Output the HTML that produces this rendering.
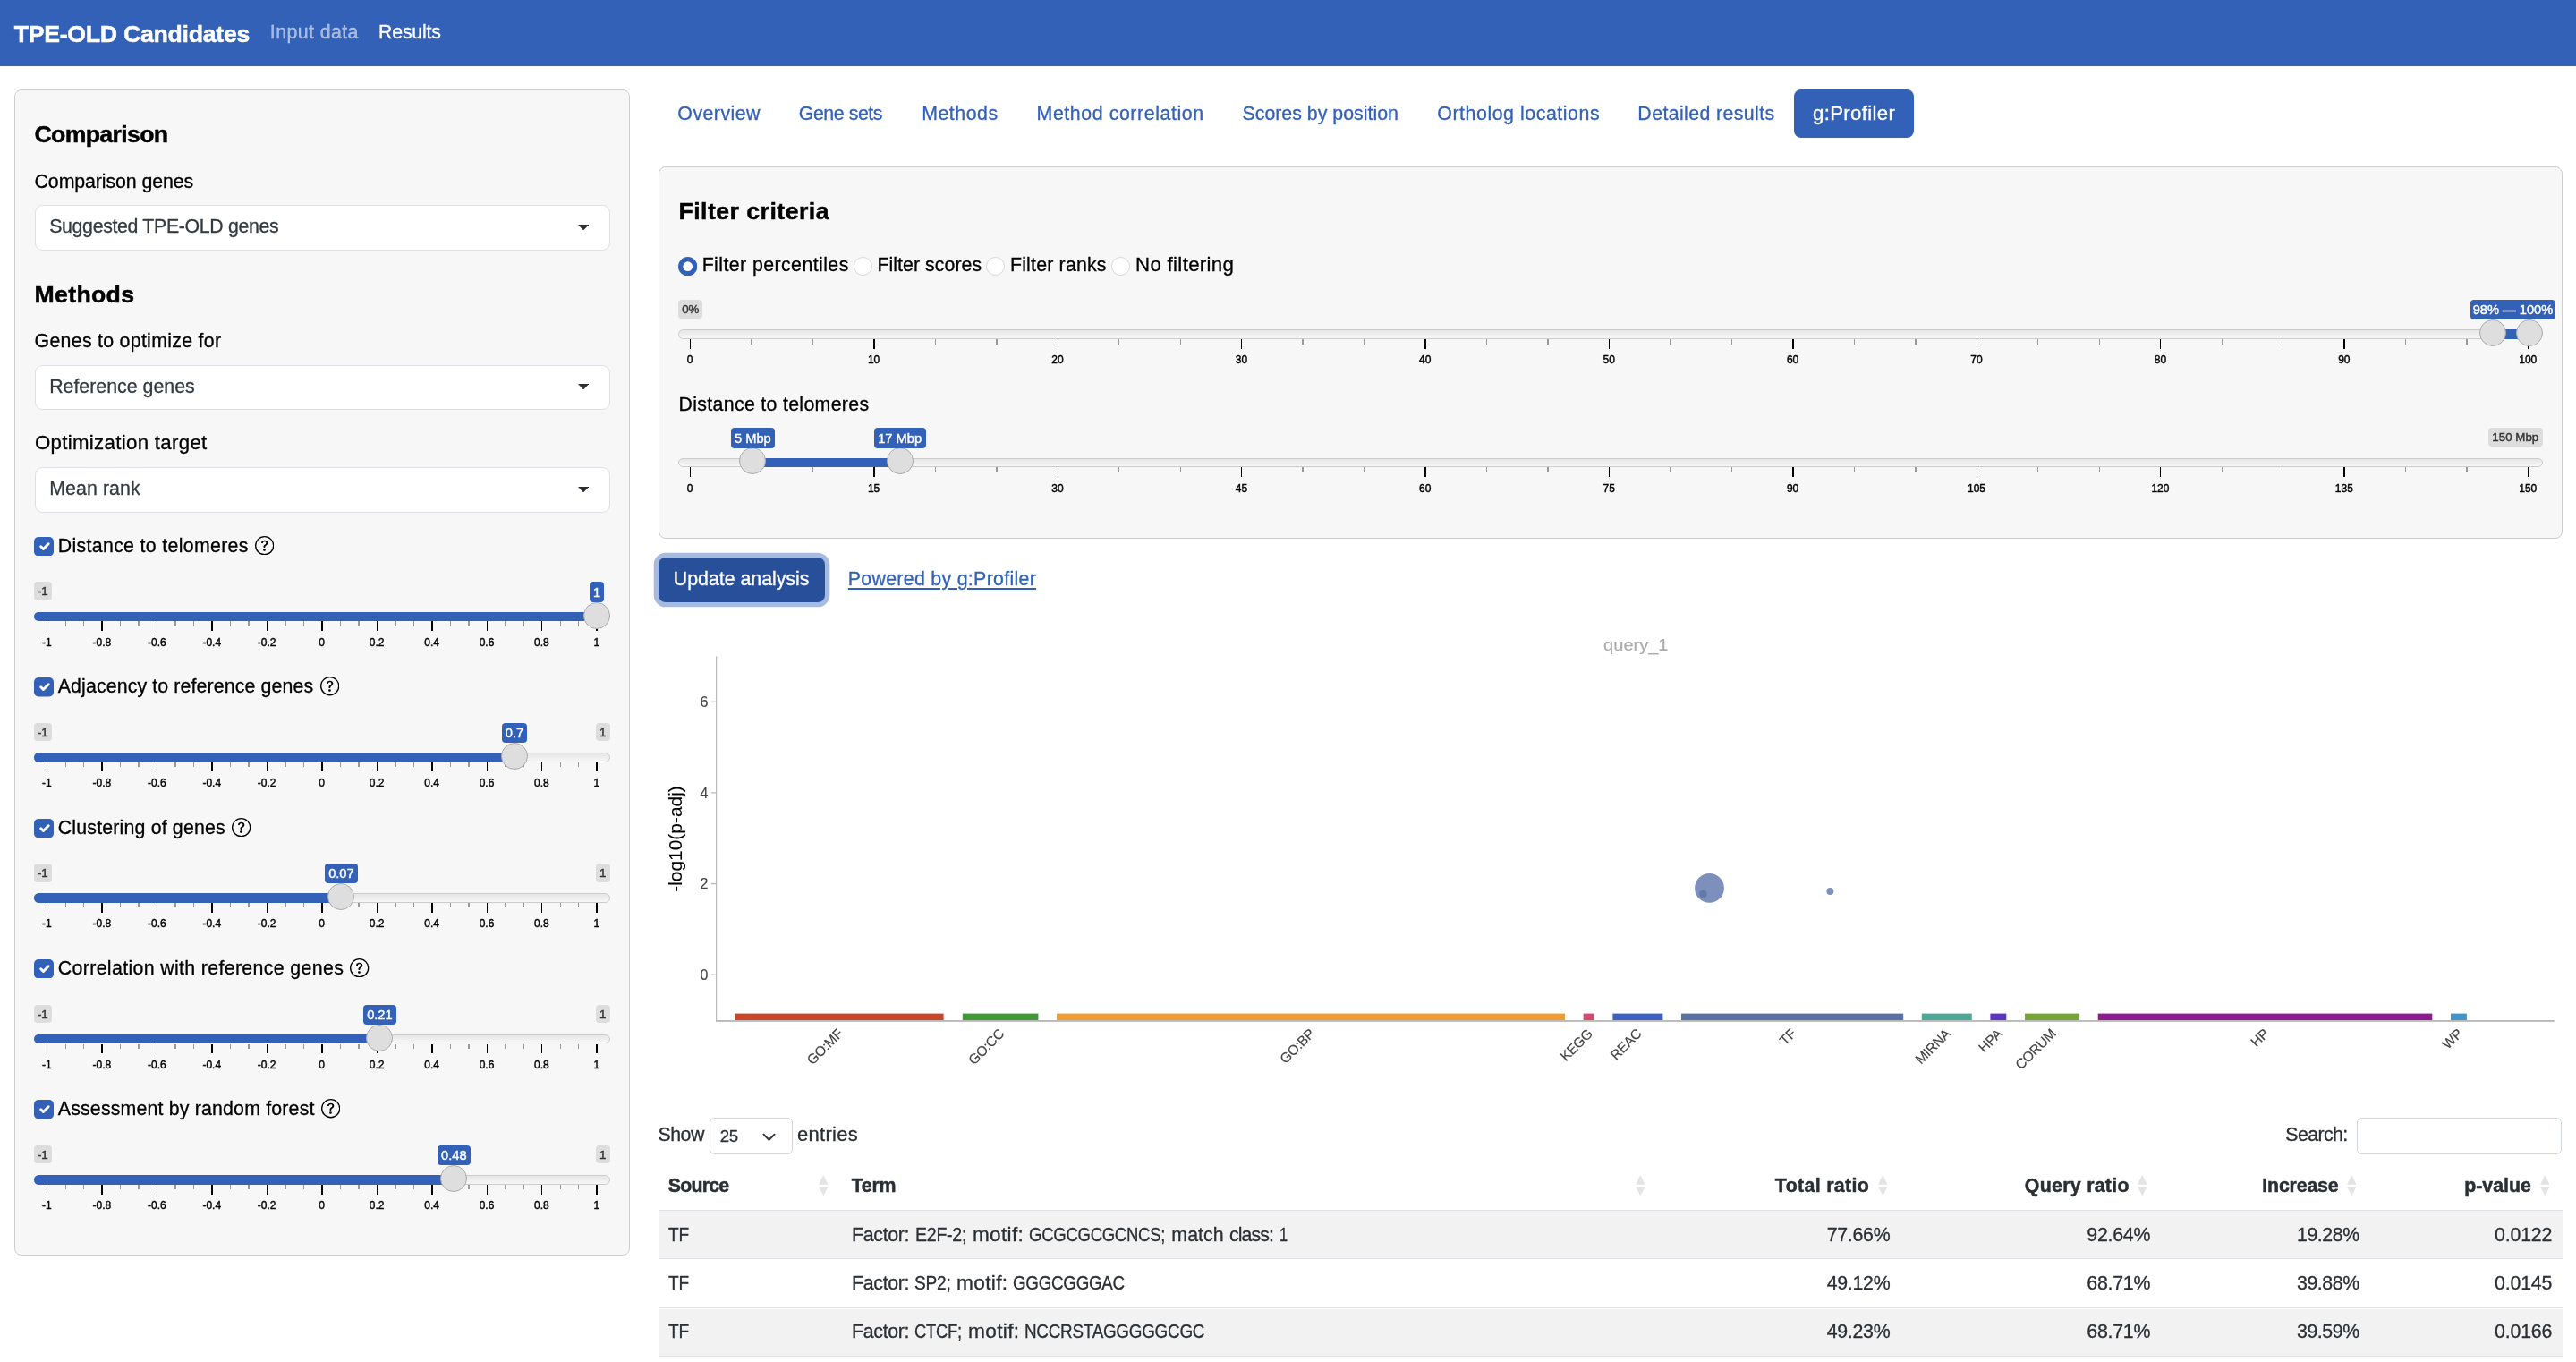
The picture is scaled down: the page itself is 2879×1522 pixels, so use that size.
<!DOCTYPE html>
<html lang="en"><head><meta charset="utf-8"><title>TPE-OLD Candidates</title><style>
html,body{margin:0;padding:0;background:#fff;}
body{width:2879px;height:1522px;overflow:hidden;position:relative;font-family:"Liberation Sans", sans-serif;}
#p{position:absolute;left:0;top:0;width:2879px;height:1522px;will-change:transform;}
#p>div,#p>span,#p>svg{position:absolute;display:block;}
#p>span{white-space:nowrap;line-height:1;-webkit-text-stroke:0.3px;}
span.c{text-align:center;}
span.r{text-align:right;}
</style></head>
<body><div id="p">
<div style="left:0.00px;top:0.00px;width:2879.00px;height:74.00px;background:#3361b8;"></div>
<span style="left:15.67px;top:24.93px;font-size:26.67px;color:#fff;font-weight:700;letter-spacing:-0.258px;-webkit-text-stroke:0.5px;">TPE-OLD Candidates</span>
<span style="left:301.87px;top:25.51px;font-size:21.33px;color:rgba(255,255,255,.55);font-weight:400;letter-spacing:0.407px;">Input data</span>
<span style="left:423.07px;top:25.51px;font-size:21.33px;color:#fff;font-weight:400;letter-spacing:-0.214px;">Results</span>
<div style="left:16.00px;top:100.00px;width:688.00px;height:1302.60px;background:#f7f7f7;border:1px solid #cdcdcd;border-radius:8px;box-sizing:border-box;"></div>
<span style="left:38.47px;top:137.03px;font-size:26.67px;color:#000;font-weight:700;letter-spacing:-0.657px;-webkit-text-stroke:0.5px;">Comparison</span>
<span style="left:38.47px;top:315.83px;font-size:26.67px;color:#000;font-weight:700;letter-spacing:0.334px;-webkit-text-stroke:0.5px;">Methods</span>
<span style="left:38.57px;top:192.51px;font-size:21.33px;color:#000;font-weight:400;letter-spacing:-0.093px;">Comparison genes</span>
<div style="left:38.50px;top:229.10px;width:643.20px;height:50.60px;background:#fff;border:1px solid #dcdfe5;border-radius:8.5px;box-sizing:border-box;"></div>
<span style="left:55.17px;top:243.01px;font-size:21.33px;color:#343a40;font-weight:400;letter-spacing:-0.335px;">Suggested TPE-OLD genes</span>
<svg style="left:646px;top:250.80px" width="12.2" height="6.4" viewBox="0 0 12.2 6.4"><path d="M0 0H12.2L6.1 6.4z" fill="#2d2f33"/></svg>
<span style="left:38.57px;top:370.91px;font-size:21.33px;color:#000;font-weight:400;letter-spacing:0.286px;">Genes to optimize for</span>
<div style="left:38.50px;top:408.00px;width:643.20px;height:49.90px;background:#fff;border:1px solid #dcdfe5;border-radius:8.5px;box-sizing:border-box;"></div>
<span style="left:55.17px;top:421.91px;font-size:21.33px;color:#343a40;font-weight:400;letter-spacing:0.006px;">Reference genes</span>
<svg style="left:646px;top:428.80px" width="12.2" height="6.4" viewBox="0 0 12.2 6.4"><path d="M0 0H12.2L6.1 6.4z" fill="#2d2f33"/></svg>
<span style="left:38.57px;top:485.31px;font-size:21.33px;color:#000;font-weight:400;letter-spacing:0.300px;transform:scaleX(1.0425);transform-origin:0 0;">Optimization target</span>
<div style="left:38.50px;top:522.20px;width:643.20px;height:50.40px;background:#fff;border:1px solid #dcdfe5;border-radius:8.5px;box-sizing:border-box;"></div>
<span style="left:55.17px;top:536.11px;font-size:21.33px;color:#343a40;font-weight:400;letter-spacing:0.095px;">Mean rank</span>
<svg style="left:646px;top:543.90px" width="12.2" height="6.4" viewBox="0 0 12.2 6.4"><path d="M0 0H12.2L6.1 6.4z" fill="#2d2f33"/></svg>
<svg style="left:38px;top:600.00px" width="22" height="21.4" viewBox="0 0 20 20" preserveAspectRatio="none"><rect width="20" height="20" rx="4.6" fill="#3361b8"/><path d="M7 10l2.5 2.55l5.2-5.35" fill="none" stroke="#fff" stroke-width="2.7" stroke-linecap="round" stroke-linejoin="round"/></svg>
<span style="left:64.77px;top:599.91px;font-size:21.33px;color:#000;font-weight:400;letter-spacing:0.319px;">Distance to telomeres</span>
<svg style="left:284.80px;top:599.10px" width="21.4" height="21.4" viewBox="0 0 16 16" fill="#000"><path d="M8 15A7 7 0 1 1 8 1a7 7 0 0 1 0 14zm0 1A8 8 0 1 0 8 0a8 8 0 0 0 0 16z"/><path d="M5.255 5.786a.237.237 0 0 0 .241.247h.825c.138 0 .248-.113.266-.25.09-.656.54-1.134 1.342-1.134.686 0 1.314.343 1.314 1.168 0 .635-.374.927-.965 1.371-.673.489-1.206 1.06-1.168 1.987l.003.217a.25.25 0 0 0 .25.246h.811a.25.25 0 0 0 .25-.25v-.105c0-.718.273-.927 1.01-1.486.609-.463 1.244-.977 1.244-2.056 0-1.511-1.276-2.241-2.673-2.241-1.267 0-2.655.59-2.75 2.286zm1.557 5.763c0 .533.425.927 1.01.927.609 0 1.028-.394 1.028-.927 0-.552-.42-.94-1.029-.94-.584 0-1.009.388-1.009.94z"/></svg>
<div style="left:38.00px;top:683.63px;width:643.80px;height:10.67px;box-sizing:border-box;border:1px solid #ccc;border-radius:6px;background:linear-gradient(to bottom,#dedede -50%,#fff 150%);"></div>
<div style="left:38.00px;top:683.63px;width:629.13px;height:10.67px;background:#3361b8;border-radius:6px 0 0 6px;"></div>
<div style="left:52.03px;top:694.30px;width:1.40px;height:10.67px;background:#000;"></div>
<span class="c" style="left:-47.57px;width:200px;top:711.66px;font-size:12px;color:#000;font-weight:400;-webkit-text-stroke:0.42px;">-1</span>
<div style="left:72.51px;top:694.30px;width:1.40px;height:5.33px;background:#999;"></div>
<div style="left:92.99px;top:694.30px;width:1.40px;height:5.33px;background:#999;"></div>
<div style="left:113.47px;top:694.30px;width:1.40px;height:10.67px;background:#000;"></div>
<span class="c" style="left:13.87px;width:200px;top:711.66px;font-size:12px;color:#000;font-weight:400;-webkit-text-stroke:0.42px;">-0.8</span>
<div style="left:133.95px;top:694.30px;width:1.40px;height:5.33px;background:#999;"></div>
<div style="left:154.44px;top:694.30px;width:1.40px;height:5.33px;background:#999;"></div>
<div style="left:174.92px;top:694.30px;width:1.40px;height:10.67px;background:#000;"></div>
<span class="c" style="left:75.32px;width:200px;top:711.66px;font-size:12px;color:#000;font-weight:400;-webkit-text-stroke:0.42px;">-0.6</span>
<div style="left:195.40px;top:694.30px;width:1.40px;height:5.33px;background:#999;"></div>
<div style="left:215.88px;top:694.30px;width:1.40px;height:5.33px;background:#999;"></div>
<div style="left:236.36px;top:694.30px;width:1.40px;height:10.67px;background:#000;"></div>
<span class="c" style="left:136.76px;width:200px;top:711.66px;font-size:12px;color:#000;font-weight:400;-webkit-text-stroke:0.42px;">-0.4</span>
<div style="left:256.85px;top:694.30px;width:1.40px;height:5.33px;background:#999;"></div>
<div style="left:277.33px;top:694.30px;width:1.40px;height:5.33px;background:#999;"></div>
<div style="left:297.81px;top:694.30px;width:1.40px;height:10.67px;background:#000;"></div>
<span class="c" style="left:198.21px;width:200px;top:711.66px;font-size:12px;color:#000;font-weight:400;-webkit-text-stroke:0.42px;">-0.2</span>
<div style="left:318.29px;top:694.30px;width:1.40px;height:5.33px;background:#999;"></div>
<div style="left:338.77px;top:694.30px;width:1.40px;height:5.33px;background:#999;"></div>
<div style="left:359.26px;top:694.30px;width:1.40px;height:10.67px;background:#000;"></div>
<span class="c" style="left:259.66px;width:200px;top:711.66px;font-size:12px;color:#000;font-weight:400;-webkit-text-stroke:0.42px;">0</span>
<div style="left:379.74px;top:694.30px;width:1.40px;height:5.33px;background:#999;"></div>
<div style="left:400.22px;top:694.30px;width:1.40px;height:5.33px;background:#999;"></div>
<div style="left:420.70px;top:694.30px;width:1.40px;height:10.67px;background:#000;"></div>
<span class="c" style="left:321.10px;width:200px;top:711.66px;font-size:12px;color:#000;font-weight:400;-webkit-text-stroke:0.42px;">0.2</span>
<div style="left:441.18px;top:694.30px;width:1.40px;height:5.33px;background:#999;"></div>
<div style="left:461.67px;top:694.30px;width:1.40px;height:5.33px;background:#999;"></div>
<div style="left:482.15px;top:694.30px;width:1.40px;height:10.67px;background:#000;"></div>
<span class="c" style="left:382.55px;width:200px;top:711.66px;font-size:12px;color:#000;font-weight:400;-webkit-text-stroke:0.42px;">0.4</span>
<div style="left:502.63px;top:694.30px;width:1.40px;height:5.33px;background:#999;"></div>
<div style="left:523.11px;top:694.30px;width:1.40px;height:5.33px;background:#999;"></div>
<div style="left:543.59px;top:694.30px;width:1.40px;height:10.67px;background:#000;"></div>
<span class="c" style="left:443.99px;width:200px;top:711.66px;font-size:12px;color:#000;font-weight:400;-webkit-text-stroke:0.42px;">0.6</span>
<div style="left:564.08px;top:694.30px;width:1.40px;height:5.33px;background:#999;"></div>
<div style="left:584.56px;top:694.30px;width:1.40px;height:5.33px;background:#999;"></div>
<div style="left:605.04px;top:694.30px;width:1.40px;height:10.67px;background:#000;"></div>
<span class="c" style="left:505.44px;width:200px;top:711.66px;font-size:12px;color:#000;font-weight:400;-webkit-text-stroke:0.42px;">0.8</span>
<div style="left:625.52px;top:694.30px;width:1.40px;height:5.33px;background:#999;"></div>
<div style="left:646.00px;top:694.30px;width:1.40px;height:5.33px;background:#999;"></div>
<div style="left:666.49px;top:694.30px;width:1.40px;height:10.67px;background:#000;"></div>
<span class="c" style="left:566.89px;width:200px;top:711.66px;font-size:12px;color:#000;font-weight:400;-webkit-text-stroke:0.42px;">1</span>
<div style="left:652.13px;top:672.50px;width:30.00px;height:30.00px;box-sizing:border-box;border:1px solid #ababab;background:#dedede;border-radius:50%;"></div>
<div style="left:38.00px;top:650.30px;width:19.60px;height:20.60px;background:rgba(0,0,0,.1);border-radius:4px;"></div>
<span class="c" style="left:-52.20px;width:200px;top:654.40px;font-size:13.33px;color:#333;font-weight:400;-webkit-text-stroke:0.42px;">-1</span>
<div style="left:659.14px;top:650.30px;width:16.00px;height:22.40px;background:#3361b8;border-radius:4px;"></div>
<span class="c" style="left:567.14px;width:200px;top:654.68px;font-size:14.67px;color:#fff;font-weight:400;-webkit-text-stroke:0.42px;">1</span>
<svg style="left:38px;top:757.30px" width="22" height="21.4" viewBox="0 0 20 20" preserveAspectRatio="none"><rect width="20" height="20" rx="4.6" fill="#3361b8"/><path d="M7 10l2.5 2.55l5.2-5.35" fill="none" stroke="#fff" stroke-width="2.7" stroke-linecap="round" stroke-linejoin="round"/></svg>
<span style="left:64.77px;top:757.21px;font-size:21.33px;color:#000;font-weight:400;letter-spacing:0.117px;">Adjacency to reference genes</span>
<svg style="left:357.50px;top:756.40px" width="21.4" height="21.4" viewBox="0 0 16 16" fill="#000"><path d="M8 15A7 7 0 1 1 8 1a7 7 0 0 1 0 14zm0 1A8 8 0 1 0 8 0a8 8 0 0 0 0 16z"/><path d="M5.255 5.786a.237.237 0 0 0 .241.247h.825c.138 0 .248-.113.266-.25.09-.656.54-1.134 1.342-1.134.686 0 1.314.343 1.314 1.168 0 .635-.374.927-.965 1.371-.673.489-1.206 1.06-1.168 1.987l.003.217a.25.25 0 0 0 .25.246h.811a.25.25 0 0 0 .25-.25v-.105c0-.718.273-.927 1.01-1.486.609-.463 1.244-.977 1.244-2.056 0-1.511-1.276-2.241-2.673-2.241-1.267 0-2.655.59-2.75 2.286zm1.557 5.763c0 .533.425.927 1.01.927.609 0 1.028-.394 1.028-.927 0-.552-.42-.94-1.029-.94-.584 0-1.009.388-1.009.94z"/></svg>
<div style="left:38.00px;top:841.03px;width:643.80px;height:10.67px;box-sizing:border-box;border:1px solid #ccc;border-radius:6px;background:linear-gradient(to bottom,#dedede -50%,#fff 150%);"></div>
<div style="left:38.00px;top:841.03px;width:536.96px;height:10.67px;background:#3361b8;border-radius:6px 0 0 6px;"></div>
<div style="left:52.03px;top:851.70px;width:1.40px;height:10.67px;background:#000;"></div>
<span class="c" style="left:-47.57px;width:200px;top:869.06px;font-size:12px;color:#000;font-weight:400;-webkit-text-stroke:0.42px;">-1</span>
<div style="left:72.51px;top:851.70px;width:1.40px;height:5.33px;background:#999;"></div>
<div style="left:92.99px;top:851.70px;width:1.40px;height:5.33px;background:#999;"></div>
<div style="left:113.47px;top:851.70px;width:1.40px;height:10.67px;background:#000;"></div>
<span class="c" style="left:13.87px;width:200px;top:869.06px;font-size:12px;color:#000;font-weight:400;-webkit-text-stroke:0.42px;">-0.8</span>
<div style="left:133.95px;top:851.70px;width:1.40px;height:5.33px;background:#999;"></div>
<div style="left:154.44px;top:851.70px;width:1.40px;height:5.33px;background:#999;"></div>
<div style="left:174.92px;top:851.70px;width:1.40px;height:10.67px;background:#000;"></div>
<span class="c" style="left:75.32px;width:200px;top:869.06px;font-size:12px;color:#000;font-weight:400;-webkit-text-stroke:0.42px;">-0.6</span>
<div style="left:195.40px;top:851.70px;width:1.40px;height:5.33px;background:#999;"></div>
<div style="left:215.88px;top:851.70px;width:1.40px;height:5.33px;background:#999;"></div>
<div style="left:236.36px;top:851.70px;width:1.40px;height:10.67px;background:#000;"></div>
<span class="c" style="left:136.76px;width:200px;top:869.06px;font-size:12px;color:#000;font-weight:400;-webkit-text-stroke:0.42px;">-0.4</span>
<div style="left:256.85px;top:851.70px;width:1.40px;height:5.33px;background:#999;"></div>
<div style="left:277.33px;top:851.70px;width:1.40px;height:5.33px;background:#999;"></div>
<div style="left:297.81px;top:851.70px;width:1.40px;height:10.67px;background:#000;"></div>
<span class="c" style="left:198.21px;width:200px;top:869.06px;font-size:12px;color:#000;font-weight:400;-webkit-text-stroke:0.42px;">-0.2</span>
<div style="left:318.29px;top:851.70px;width:1.40px;height:5.33px;background:#999;"></div>
<div style="left:338.77px;top:851.70px;width:1.40px;height:5.33px;background:#999;"></div>
<div style="left:359.26px;top:851.70px;width:1.40px;height:10.67px;background:#000;"></div>
<span class="c" style="left:259.66px;width:200px;top:869.06px;font-size:12px;color:#000;font-weight:400;-webkit-text-stroke:0.42px;">0</span>
<div style="left:379.74px;top:851.70px;width:1.40px;height:5.33px;background:#999;"></div>
<div style="left:400.22px;top:851.70px;width:1.40px;height:5.33px;background:#999;"></div>
<div style="left:420.70px;top:851.70px;width:1.40px;height:10.67px;background:#000;"></div>
<span class="c" style="left:321.10px;width:200px;top:869.06px;font-size:12px;color:#000;font-weight:400;-webkit-text-stroke:0.42px;">0.2</span>
<div style="left:441.18px;top:851.70px;width:1.40px;height:5.33px;background:#999;"></div>
<div style="left:461.67px;top:851.70px;width:1.40px;height:5.33px;background:#999;"></div>
<div style="left:482.15px;top:851.70px;width:1.40px;height:10.67px;background:#000;"></div>
<span class="c" style="left:382.55px;width:200px;top:869.06px;font-size:12px;color:#000;font-weight:400;-webkit-text-stroke:0.42px;">0.4</span>
<div style="left:502.63px;top:851.70px;width:1.40px;height:5.33px;background:#999;"></div>
<div style="left:523.11px;top:851.70px;width:1.40px;height:5.33px;background:#999;"></div>
<div style="left:543.59px;top:851.70px;width:1.40px;height:10.67px;background:#000;"></div>
<span class="c" style="left:443.99px;width:200px;top:869.06px;font-size:12px;color:#000;font-weight:400;-webkit-text-stroke:0.42px;">0.6</span>
<div style="left:564.08px;top:851.70px;width:1.40px;height:5.33px;background:#999;"></div>
<div style="left:584.56px;top:851.70px;width:1.40px;height:5.33px;background:#999;"></div>
<div style="left:605.04px;top:851.70px;width:1.40px;height:10.67px;background:#000;"></div>
<span class="c" style="left:505.44px;width:200px;top:869.06px;font-size:12px;color:#000;font-weight:400;-webkit-text-stroke:0.42px;">0.8</span>
<div style="left:625.52px;top:851.70px;width:1.40px;height:5.33px;background:#999;"></div>
<div style="left:646.00px;top:851.70px;width:1.40px;height:5.33px;background:#999;"></div>
<div style="left:666.49px;top:851.70px;width:1.40px;height:10.67px;background:#000;"></div>
<span class="c" style="left:566.89px;width:200px;top:869.06px;font-size:12px;color:#000;font-weight:400;-webkit-text-stroke:0.42px;">1</span>
<div style="left:559.96px;top:829.90px;width:30.00px;height:30.00px;box-sizing:border-box;border:1px solid #ababab;background:#dedede;border-radius:50%;"></div>
<div style="left:38.00px;top:807.70px;width:19.60px;height:20.60px;background:rgba(0,0,0,.1);border-radius:4px;"></div>
<span class="c" style="left:-52.20px;width:200px;top:811.80px;font-size:13.33px;color:#333;font-weight:400;-webkit-text-stroke:0.42px;">-1</span>
<div style="left:665.80px;top:807.70px;width:16.00px;height:20.60px;background:rgba(0,0,0,.1);border-radius:4px;"></div>
<span class="c" style="left:573.80px;width:200px;top:811.80px;font-size:13.33px;color:#333;font-weight:400;-webkit-text-stroke:0.42px;">1</span>
<div style="left:560.97px;top:807.70px;width:28.00px;height:22.40px;background:#3361b8;border-radius:4px;"></div>
<span class="c" style="left:474.97px;width:200px;top:812.08px;font-size:14.67px;color:#fff;font-weight:400;-webkit-text-stroke:0.42px;">0.7</span>
<svg style="left:38px;top:914.60px" width="22" height="21.4" viewBox="0 0 20 20" preserveAspectRatio="none"><rect width="20" height="20" rx="4.6" fill="#3361b8"/><path d="M7 10l2.5 2.55l5.2-5.35" fill="none" stroke="#fff" stroke-width="2.7" stroke-linecap="round" stroke-linejoin="round"/></svg>
<span style="left:64.77px;top:914.51px;font-size:21.33px;color:#000;font-weight:400;letter-spacing:0.175px;">Clustering of genes</span>
<svg style="left:259.10px;top:913.70px" width="21.4" height="21.4" viewBox="0 0 16 16" fill="#000"><path d="M8 15A7 7 0 1 1 8 1a7 7 0 0 1 0 14zm0 1A8 8 0 1 0 8 0a8 8 0 0 0 0 16z"/><path d="M5.255 5.786a.237.237 0 0 0 .241.247h.825c.138 0 .248-.113.266-.25.09-.656.54-1.134 1.342-1.134.686 0 1.314.343 1.314 1.168 0 .635-.374.927-.965 1.371-.673.489-1.206 1.06-1.168 1.987l.003.217a.25.25 0 0 0 .25.246h.811a.25.25 0 0 0 .25-.25v-.105c0-.718.273-.927 1.01-1.486.609-.463 1.244-.977 1.244-2.056 0-1.511-1.276-2.241-2.673-2.241-1.267 0-2.655.59-2.75 2.286zm1.557 5.763c0 .533.425.927 1.01.927.609 0 1.028-.394 1.028-.927 0-.552-.42-.94-1.029-.94-.584 0-1.009.388-1.009.94z"/></svg>
<div style="left:38.00px;top:998.43px;width:643.80px;height:10.67px;box-sizing:border-box;border:1px solid #ccc;border-radius:6px;background:linear-gradient(to bottom,#dedede -50%,#fff 150%);"></div>
<div style="left:38.00px;top:998.43px;width:343.41px;height:10.67px;background:#3361b8;border-radius:6px 0 0 6px;"></div>
<div style="left:52.03px;top:1009.10px;width:1.40px;height:10.67px;background:#000;"></div>
<span class="c" style="left:-47.57px;width:200px;top:1026.46px;font-size:12px;color:#000;font-weight:400;-webkit-text-stroke:0.42px;">-1</span>
<div style="left:72.51px;top:1009.10px;width:1.40px;height:5.33px;background:#999;"></div>
<div style="left:92.99px;top:1009.10px;width:1.40px;height:5.33px;background:#999;"></div>
<div style="left:113.47px;top:1009.10px;width:1.40px;height:10.67px;background:#000;"></div>
<span class="c" style="left:13.87px;width:200px;top:1026.46px;font-size:12px;color:#000;font-weight:400;-webkit-text-stroke:0.42px;">-0.8</span>
<div style="left:133.95px;top:1009.10px;width:1.40px;height:5.33px;background:#999;"></div>
<div style="left:154.44px;top:1009.10px;width:1.40px;height:5.33px;background:#999;"></div>
<div style="left:174.92px;top:1009.10px;width:1.40px;height:10.67px;background:#000;"></div>
<span class="c" style="left:75.32px;width:200px;top:1026.46px;font-size:12px;color:#000;font-weight:400;-webkit-text-stroke:0.42px;">-0.6</span>
<div style="left:195.40px;top:1009.10px;width:1.40px;height:5.33px;background:#999;"></div>
<div style="left:215.88px;top:1009.10px;width:1.40px;height:5.33px;background:#999;"></div>
<div style="left:236.36px;top:1009.10px;width:1.40px;height:10.67px;background:#000;"></div>
<span class="c" style="left:136.76px;width:200px;top:1026.46px;font-size:12px;color:#000;font-weight:400;-webkit-text-stroke:0.42px;">-0.4</span>
<div style="left:256.85px;top:1009.10px;width:1.40px;height:5.33px;background:#999;"></div>
<div style="left:277.33px;top:1009.10px;width:1.40px;height:5.33px;background:#999;"></div>
<div style="left:297.81px;top:1009.10px;width:1.40px;height:10.67px;background:#000;"></div>
<span class="c" style="left:198.21px;width:200px;top:1026.46px;font-size:12px;color:#000;font-weight:400;-webkit-text-stroke:0.42px;">-0.2</span>
<div style="left:318.29px;top:1009.10px;width:1.40px;height:5.33px;background:#999;"></div>
<div style="left:338.77px;top:1009.10px;width:1.40px;height:5.33px;background:#999;"></div>
<div style="left:359.26px;top:1009.10px;width:1.40px;height:10.67px;background:#000;"></div>
<span class="c" style="left:259.66px;width:200px;top:1026.46px;font-size:12px;color:#000;font-weight:400;-webkit-text-stroke:0.42px;">0</span>
<div style="left:379.74px;top:1009.10px;width:1.40px;height:5.33px;background:#999;"></div>
<div style="left:400.22px;top:1009.10px;width:1.40px;height:5.33px;background:#999;"></div>
<div style="left:420.70px;top:1009.10px;width:1.40px;height:10.67px;background:#000;"></div>
<span class="c" style="left:321.10px;width:200px;top:1026.46px;font-size:12px;color:#000;font-weight:400;-webkit-text-stroke:0.42px;">0.2</span>
<div style="left:441.18px;top:1009.10px;width:1.40px;height:5.33px;background:#999;"></div>
<div style="left:461.67px;top:1009.10px;width:1.40px;height:5.33px;background:#999;"></div>
<div style="left:482.15px;top:1009.10px;width:1.40px;height:10.67px;background:#000;"></div>
<span class="c" style="left:382.55px;width:200px;top:1026.46px;font-size:12px;color:#000;font-weight:400;-webkit-text-stroke:0.42px;">0.4</span>
<div style="left:502.63px;top:1009.10px;width:1.40px;height:5.33px;background:#999;"></div>
<div style="left:523.11px;top:1009.10px;width:1.40px;height:5.33px;background:#999;"></div>
<div style="left:543.59px;top:1009.10px;width:1.40px;height:10.67px;background:#000;"></div>
<span class="c" style="left:443.99px;width:200px;top:1026.46px;font-size:12px;color:#000;font-weight:400;-webkit-text-stroke:0.42px;">0.6</span>
<div style="left:564.08px;top:1009.10px;width:1.40px;height:5.33px;background:#999;"></div>
<div style="left:584.56px;top:1009.10px;width:1.40px;height:5.33px;background:#999;"></div>
<div style="left:605.04px;top:1009.10px;width:1.40px;height:10.67px;background:#000;"></div>
<span class="c" style="left:505.44px;width:200px;top:1026.46px;font-size:12px;color:#000;font-weight:400;-webkit-text-stroke:0.42px;">0.8</span>
<div style="left:625.52px;top:1009.10px;width:1.40px;height:5.33px;background:#999;"></div>
<div style="left:646.00px;top:1009.10px;width:1.40px;height:5.33px;background:#999;"></div>
<div style="left:666.49px;top:1009.10px;width:1.40px;height:10.67px;background:#000;"></div>
<span class="c" style="left:566.89px;width:200px;top:1026.46px;font-size:12px;color:#000;font-weight:400;-webkit-text-stroke:0.42px;">1</span>
<div style="left:366.41px;top:987.30px;width:30.00px;height:30.00px;box-sizing:border-box;border:1px solid #ababab;background:#dedede;border-radius:50%;"></div>
<div style="left:38.00px;top:965.10px;width:19.60px;height:20.60px;background:rgba(0,0,0,.1);border-radius:4px;"></div>
<span class="c" style="left:-52.20px;width:200px;top:969.20px;font-size:13.33px;color:#333;font-weight:400;-webkit-text-stroke:0.42px;">-1</span>
<div style="left:665.80px;top:965.10px;width:16.00px;height:20.60px;background:rgba(0,0,0,.1);border-radius:4px;"></div>
<span class="c" style="left:573.80px;width:200px;top:969.20px;font-size:13.33px;color:#333;font-weight:400;-webkit-text-stroke:0.42px;">1</span>
<div style="left:362.81px;top:965.10px;width:37.20px;height:22.40px;background:#3361b8;border-radius:4px;"></div>
<span class="c" style="left:281.41px;width:200px;top:969.48px;font-size:14.67px;color:#fff;font-weight:400;-webkit-text-stroke:0.42px;">0.07</span>
<svg style="left:38px;top:1071.90px" width="22" height="21.4" viewBox="0 0 20 20" preserveAspectRatio="none"><rect width="20" height="20" rx="4.6" fill="#3361b8"/><path d="M7 10l2.5 2.55l5.2-5.35" fill="none" stroke="#fff" stroke-width="2.7" stroke-linecap="round" stroke-linejoin="round"/></svg>
<span style="left:64.77px;top:1071.81px;font-size:21.33px;color:#000;font-weight:400;letter-spacing:0.348px;">Correlation with reference genes</span>
<svg style="left:391.20px;top:1071.00px" width="21.4" height="21.4" viewBox="0 0 16 16" fill="#000"><path d="M8 15A7 7 0 1 1 8 1a7 7 0 0 1 0 14zm0 1A8 8 0 1 0 8 0a8 8 0 0 0 0 16z"/><path d="M5.255 5.786a.237.237 0 0 0 .241.247h.825c.138 0 .248-.113.266-.25.09-.656.54-1.134 1.342-1.134.686 0 1.314.343 1.314 1.168 0 .635-.374.927-.965 1.371-.673.489-1.206 1.06-1.168 1.987l.003.217a.25.25 0 0 0 .25.246h.811a.25.25 0 0 0 .25-.25v-.105c0-.718.273-.927 1.01-1.486.609-.463 1.244-.977 1.244-2.056 0-1.511-1.276-2.241-2.673-2.241-1.267 0-2.655.59-2.75 2.286zm1.557 5.763c0 .533.425.927 1.01.927.609 0 1.028-.394 1.028-.927 0-.552-.42-.94-1.029-.94-.584 0-1.009.388-1.009.94z"/></svg>
<div style="left:38.00px;top:1155.83px;width:643.80px;height:10.67px;box-sizing:border-box;border:1px solid #ccc;border-radius:6px;background:linear-gradient(to bottom,#dedede -50%,#fff 150%);"></div>
<div style="left:38.00px;top:1155.83px;width:386.42px;height:10.67px;background:#3361b8;border-radius:6px 0 0 6px;"></div>
<div style="left:52.03px;top:1166.50px;width:1.40px;height:10.67px;background:#000;"></div>
<span class="c" style="left:-47.57px;width:200px;top:1183.86px;font-size:12px;color:#000;font-weight:400;-webkit-text-stroke:0.42px;">-1</span>
<div style="left:72.51px;top:1166.50px;width:1.40px;height:5.33px;background:#999;"></div>
<div style="left:92.99px;top:1166.50px;width:1.40px;height:5.33px;background:#999;"></div>
<div style="left:113.47px;top:1166.50px;width:1.40px;height:10.67px;background:#000;"></div>
<span class="c" style="left:13.87px;width:200px;top:1183.86px;font-size:12px;color:#000;font-weight:400;-webkit-text-stroke:0.42px;">-0.8</span>
<div style="left:133.95px;top:1166.50px;width:1.40px;height:5.33px;background:#999;"></div>
<div style="left:154.44px;top:1166.50px;width:1.40px;height:5.33px;background:#999;"></div>
<div style="left:174.92px;top:1166.50px;width:1.40px;height:10.67px;background:#000;"></div>
<span class="c" style="left:75.32px;width:200px;top:1183.86px;font-size:12px;color:#000;font-weight:400;-webkit-text-stroke:0.42px;">-0.6</span>
<div style="left:195.40px;top:1166.50px;width:1.40px;height:5.33px;background:#999;"></div>
<div style="left:215.88px;top:1166.50px;width:1.40px;height:5.33px;background:#999;"></div>
<div style="left:236.36px;top:1166.50px;width:1.40px;height:10.67px;background:#000;"></div>
<span class="c" style="left:136.76px;width:200px;top:1183.86px;font-size:12px;color:#000;font-weight:400;-webkit-text-stroke:0.42px;">-0.4</span>
<div style="left:256.85px;top:1166.50px;width:1.40px;height:5.33px;background:#999;"></div>
<div style="left:277.33px;top:1166.50px;width:1.40px;height:5.33px;background:#999;"></div>
<div style="left:297.81px;top:1166.50px;width:1.40px;height:10.67px;background:#000;"></div>
<span class="c" style="left:198.21px;width:200px;top:1183.86px;font-size:12px;color:#000;font-weight:400;-webkit-text-stroke:0.42px;">-0.2</span>
<div style="left:318.29px;top:1166.50px;width:1.40px;height:5.33px;background:#999;"></div>
<div style="left:338.77px;top:1166.50px;width:1.40px;height:5.33px;background:#999;"></div>
<div style="left:359.26px;top:1166.50px;width:1.40px;height:10.67px;background:#000;"></div>
<span class="c" style="left:259.66px;width:200px;top:1183.86px;font-size:12px;color:#000;font-weight:400;-webkit-text-stroke:0.42px;">0</span>
<div style="left:379.74px;top:1166.50px;width:1.40px;height:5.33px;background:#999;"></div>
<div style="left:400.22px;top:1166.50px;width:1.40px;height:5.33px;background:#999;"></div>
<div style="left:420.70px;top:1166.50px;width:1.40px;height:10.67px;background:#000;"></div>
<span class="c" style="left:321.10px;width:200px;top:1183.86px;font-size:12px;color:#000;font-weight:400;-webkit-text-stroke:0.42px;">0.2</span>
<div style="left:441.18px;top:1166.50px;width:1.40px;height:5.33px;background:#999;"></div>
<div style="left:461.67px;top:1166.50px;width:1.40px;height:5.33px;background:#999;"></div>
<div style="left:482.15px;top:1166.50px;width:1.40px;height:10.67px;background:#000;"></div>
<span class="c" style="left:382.55px;width:200px;top:1183.86px;font-size:12px;color:#000;font-weight:400;-webkit-text-stroke:0.42px;">0.4</span>
<div style="left:502.63px;top:1166.50px;width:1.40px;height:5.33px;background:#999;"></div>
<div style="left:523.11px;top:1166.50px;width:1.40px;height:5.33px;background:#999;"></div>
<div style="left:543.59px;top:1166.50px;width:1.40px;height:10.67px;background:#000;"></div>
<span class="c" style="left:443.99px;width:200px;top:1183.86px;font-size:12px;color:#000;font-weight:400;-webkit-text-stroke:0.42px;">0.6</span>
<div style="left:564.08px;top:1166.50px;width:1.40px;height:5.33px;background:#999;"></div>
<div style="left:584.56px;top:1166.50px;width:1.40px;height:5.33px;background:#999;"></div>
<div style="left:605.04px;top:1166.50px;width:1.40px;height:10.67px;background:#000;"></div>
<span class="c" style="left:505.44px;width:200px;top:1183.86px;font-size:12px;color:#000;font-weight:400;-webkit-text-stroke:0.42px;">0.8</span>
<div style="left:625.52px;top:1166.50px;width:1.40px;height:5.33px;background:#999;"></div>
<div style="left:646.00px;top:1166.50px;width:1.40px;height:5.33px;background:#999;"></div>
<div style="left:666.49px;top:1166.50px;width:1.40px;height:10.67px;background:#000;"></div>
<span class="c" style="left:566.89px;width:200px;top:1183.86px;font-size:12px;color:#000;font-weight:400;-webkit-text-stroke:0.42px;">1</span>
<div style="left:409.42px;top:1144.70px;width:30.00px;height:30.00px;box-sizing:border-box;border:1px solid #ababab;background:#dedede;border-radius:50%;"></div>
<div style="left:38.00px;top:1122.50px;width:19.60px;height:20.60px;background:rgba(0,0,0,.1);border-radius:4px;"></div>
<span class="c" style="left:-52.20px;width:200px;top:1126.60px;font-size:13.33px;color:#333;font-weight:400;-webkit-text-stroke:0.42px;">-1</span>
<div style="left:665.80px;top:1122.50px;width:16.00px;height:20.60px;background:rgba(0,0,0,.1);border-radius:4px;"></div>
<span class="c" style="left:573.80px;width:200px;top:1126.60px;font-size:13.33px;color:#333;font-weight:400;-webkit-text-stroke:0.42px;">1</span>
<div style="left:405.72px;top:1122.50px;width:37.40px;height:22.40px;background:#3361b8;border-radius:4px;"></div>
<span class="c" style="left:324.42px;width:200px;top:1126.88px;font-size:14.67px;color:#fff;font-weight:400;-webkit-text-stroke:0.42px;">0.21</span>
<svg style="left:38px;top:1229.20px" width="22" height="21.4" viewBox="0 0 20 20" preserveAspectRatio="none"><rect width="20" height="20" rx="4.6" fill="#3361b8"/><path d="M7 10l2.5 2.55l5.2-5.35" fill="none" stroke="#fff" stroke-width="2.7" stroke-linecap="round" stroke-linejoin="round"/></svg>
<span style="left:64.77px;top:1229.11px;font-size:21.33px;color:#000;font-weight:400;letter-spacing:0.174px;">Assessment by random forest</span>
<svg style="left:358.80px;top:1228.30px" width="21.4" height="21.4" viewBox="0 0 16 16" fill="#000"><path d="M8 15A7 7 0 1 1 8 1a7 7 0 0 1 0 14zm0 1A8 8 0 1 0 8 0a8 8 0 0 0 0 16z"/><path d="M5.255 5.786a.237.237 0 0 0 .241.247h.825c.138 0 .248-.113.266-.25.09-.656.54-1.134 1.342-1.134.686 0 1.314.343 1.314 1.168 0 .635-.374.927-.965 1.371-.673.489-1.206 1.06-1.168 1.987l.003.217a.25.25 0 0 0 .25.246h.811a.25.25 0 0 0 .25-.25v-.105c0-.718.273-.927 1.01-1.486.609-.463 1.244-.977 1.244-2.056 0-1.511-1.276-2.241-2.673-2.241-1.267 0-2.655.59-2.75 2.286zm1.557 5.763c0 .533.425.927 1.01.927.609 0 1.028-.394 1.028-.927 0-.552-.42-.94-1.029-.94-.584 0-1.009.388-1.009.94z"/></svg>
<div style="left:38.00px;top:1313.23px;width:643.80px;height:10.67px;box-sizing:border-box;border:1px solid #ccc;border-radius:6px;background:linear-gradient(to bottom,#dedede -50%,#fff 150%);"></div>
<div style="left:38.00px;top:1313.23px;width:469.37px;height:10.67px;background:#3361b8;border-radius:6px 0 0 6px;"></div>
<div style="left:52.03px;top:1323.90px;width:1.40px;height:10.67px;background:#000;"></div>
<span class="c" style="left:-47.57px;width:200px;top:1341.26px;font-size:12px;color:#000;font-weight:400;-webkit-text-stroke:0.42px;">-1</span>
<div style="left:72.51px;top:1323.90px;width:1.40px;height:5.33px;background:#999;"></div>
<div style="left:92.99px;top:1323.90px;width:1.40px;height:5.33px;background:#999;"></div>
<div style="left:113.47px;top:1323.90px;width:1.40px;height:10.67px;background:#000;"></div>
<span class="c" style="left:13.87px;width:200px;top:1341.26px;font-size:12px;color:#000;font-weight:400;-webkit-text-stroke:0.42px;">-0.8</span>
<div style="left:133.95px;top:1323.90px;width:1.40px;height:5.33px;background:#999;"></div>
<div style="left:154.44px;top:1323.90px;width:1.40px;height:5.33px;background:#999;"></div>
<div style="left:174.92px;top:1323.90px;width:1.40px;height:10.67px;background:#000;"></div>
<span class="c" style="left:75.32px;width:200px;top:1341.26px;font-size:12px;color:#000;font-weight:400;-webkit-text-stroke:0.42px;">-0.6</span>
<div style="left:195.40px;top:1323.90px;width:1.40px;height:5.33px;background:#999;"></div>
<div style="left:215.88px;top:1323.90px;width:1.40px;height:5.33px;background:#999;"></div>
<div style="left:236.36px;top:1323.90px;width:1.40px;height:10.67px;background:#000;"></div>
<span class="c" style="left:136.76px;width:200px;top:1341.26px;font-size:12px;color:#000;font-weight:400;-webkit-text-stroke:0.42px;">-0.4</span>
<div style="left:256.85px;top:1323.90px;width:1.40px;height:5.33px;background:#999;"></div>
<div style="left:277.33px;top:1323.90px;width:1.40px;height:5.33px;background:#999;"></div>
<div style="left:297.81px;top:1323.90px;width:1.40px;height:10.67px;background:#000;"></div>
<span class="c" style="left:198.21px;width:200px;top:1341.26px;font-size:12px;color:#000;font-weight:400;-webkit-text-stroke:0.42px;">-0.2</span>
<div style="left:318.29px;top:1323.90px;width:1.40px;height:5.33px;background:#999;"></div>
<div style="left:338.77px;top:1323.90px;width:1.40px;height:5.33px;background:#999;"></div>
<div style="left:359.26px;top:1323.90px;width:1.40px;height:10.67px;background:#000;"></div>
<span class="c" style="left:259.66px;width:200px;top:1341.26px;font-size:12px;color:#000;font-weight:400;-webkit-text-stroke:0.42px;">0</span>
<div style="left:379.74px;top:1323.90px;width:1.40px;height:5.33px;background:#999;"></div>
<div style="left:400.22px;top:1323.90px;width:1.40px;height:5.33px;background:#999;"></div>
<div style="left:420.70px;top:1323.90px;width:1.40px;height:10.67px;background:#000;"></div>
<span class="c" style="left:321.10px;width:200px;top:1341.26px;font-size:12px;color:#000;font-weight:400;-webkit-text-stroke:0.42px;">0.2</span>
<div style="left:441.18px;top:1323.90px;width:1.40px;height:5.33px;background:#999;"></div>
<div style="left:461.67px;top:1323.90px;width:1.40px;height:5.33px;background:#999;"></div>
<div style="left:482.15px;top:1323.90px;width:1.40px;height:10.67px;background:#000;"></div>
<span class="c" style="left:382.55px;width:200px;top:1341.26px;font-size:12px;color:#000;font-weight:400;-webkit-text-stroke:0.42px;">0.4</span>
<div style="left:502.63px;top:1323.90px;width:1.40px;height:5.33px;background:#999;"></div>
<div style="left:523.11px;top:1323.90px;width:1.40px;height:5.33px;background:#999;"></div>
<div style="left:543.59px;top:1323.90px;width:1.40px;height:10.67px;background:#000;"></div>
<span class="c" style="left:443.99px;width:200px;top:1341.26px;font-size:12px;color:#000;font-weight:400;-webkit-text-stroke:0.42px;">0.6</span>
<div style="left:564.08px;top:1323.90px;width:1.40px;height:5.33px;background:#999;"></div>
<div style="left:584.56px;top:1323.90px;width:1.40px;height:5.33px;background:#999;"></div>
<div style="left:605.04px;top:1323.90px;width:1.40px;height:10.67px;background:#000;"></div>
<span class="c" style="left:505.44px;width:200px;top:1341.26px;font-size:12px;color:#000;font-weight:400;-webkit-text-stroke:0.42px;">0.8</span>
<div style="left:625.52px;top:1323.90px;width:1.40px;height:5.33px;background:#999;"></div>
<div style="left:646.00px;top:1323.90px;width:1.40px;height:5.33px;background:#999;"></div>
<div style="left:666.49px;top:1323.90px;width:1.40px;height:10.67px;background:#000;"></div>
<span class="c" style="left:566.89px;width:200px;top:1341.26px;font-size:12px;color:#000;font-weight:400;-webkit-text-stroke:0.42px;">1</span>
<div style="left:492.37px;top:1302.10px;width:30.00px;height:30.00px;box-sizing:border-box;border:1px solid #ababab;background:#dedede;border-radius:50%;"></div>
<div style="left:38.00px;top:1279.90px;width:19.60px;height:20.60px;background:rgba(0,0,0,.1);border-radius:4px;"></div>
<span class="c" style="left:-52.20px;width:200px;top:1284.00px;font-size:13.33px;color:#333;font-weight:400;-webkit-text-stroke:0.42px;">-1</span>
<div style="left:665.80px;top:1279.90px;width:16.00px;height:20.60px;background:rgba(0,0,0,.1);border-radius:4px;"></div>
<span class="c" style="left:573.80px;width:200px;top:1284.00px;font-size:13.33px;color:#333;font-weight:400;-webkit-text-stroke:0.42px;">1</span>
<div style="left:488.68px;top:1279.90px;width:37.40px;height:22.40px;background:#3361b8;border-radius:4px;"></div>
<span class="c" style="left:407.38px;width:200px;top:1284.28px;font-size:14.67px;color:#fff;font-weight:400;-webkit-text-stroke:0.42px;">0.48</span>
<span style="left:757.37px;top:116.51px;font-size:21.33px;color:#3361b8;font-weight:400;letter-spacing:0.450px;">Overview</span>
<span style="left:892.77px;top:116.51px;font-size:21.33px;color:#3361b8;font-weight:400;letter-spacing:-0.435px;">Gene sets</span>
<span style="left:1030.17px;top:116.51px;font-size:21.33px;color:#3361b8;font-weight:400;letter-spacing:0.538px;">Methods</span>
<span style="left:1158.57px;top:116.51px;font-size:21.33px;color:#3361b8;font-weight:400;letter-spacing:0.576px;">Method correlation</span>
<span style="left:1388.47px;top:116.51px;font-size:21.33px;color:#3361b8;font-weight:400;letter-spacing:0.009px;">Scores by position</span>
<span style="left:1606.27px;top:116.51px;font-size:21.33px;color:#3361b8;font-weight:400;letter-spacing:0.555px;">Ortholog locations</span>
<span style="left:1830.37px;top:116.51px;font-size:21.33px;color:#3361b8;font-weight:400;letter-spacing:0.389px;">Detailed results</span>
<div style="left:2005.20px;top:100.20px;width:133.70px;height:53.40px;background:#3361b8;border-radius:8px;"></div>
<span style="left:2025.97px;top:116.51px;font-size:21.33px;color:#fff;font-weight:400;letter-spacing:0.300px;transform:scaleX(1.0441);transform-origin:0 0;">g:Profiler</span>
<div style="left:735.80px;top:186.00px;width:2127.80px;height:415.50px;background:#f7f7f7;border:1px solid #cdcdcd;border-radius:8px;box-sizing:border-box;"></div>
<span style="left:758.47px;top:222.63px;font-size:26.67px;color:#000;font-weight:700;letter-spacing:0.464px;-webkit-text-stroke:0.5px;">Filter criteria</span>
<svg style="left:758.00px;top:286.50px" width="21.4" height="21.4" viewBox="-8 -8 16 16"><circle r="8" fill="#3361b8"/><circle r="4" fill="#fff"/></svg>
<div style="left:954.03px;top:286.53px;width:21.33px;height:21.33px;box-sizing:border-box;border:1px solid #d3d6dc;border-radius:50%;background:#fff;"></div>
<div style="left:1102.13px;top:286.53px;width:21.33px;height:21.33px;box-sizing:border-box;border:1px solid #d3d6dc;border-radius:50%;background:#fff;"></div>
<div style="left:1241.73px;top:286.53px;width:21.33px;height:21.33px;box-sizing:border-box;border:1px solid #d3d6dc;border-radius:50%;background:#fff;"></div>
<span style="left:784.67px;top:286.11px;font-size:21.33px;color:#000;font-weight:400;letter-spacing:0.422px;">Filter percentiles</span>
<span style="left:980.47px;top:286.11px;font-size:21.33px;color:#000;font-weight:400;letter-spacing:0.042px;">Filter scores</span>
<span style="left:1128.97px;top:286.11px;font-size:21.33px;color:#000;font-weight:400;letter-spacing:0.187px;">Filter ranks</span>
<span style="left:1268.57px;top:286.11px;font-size:21.33px;color:#000;font-weight:400;letter-spacing:0.300px;transform:scaleX(1.0445);transform-origin:0 0;">No filtering</span>
<div style="left:758.20px;top:368.10px;width:2083.40px;height:10.70px;box-sizing:border-box;border:1px solid #ccc;border-radius:6px;background:linear-gradient(to bottom,#dedede -50%,#fff 150%);"></div>
<div style="left:2785.85px;top:368.10px;width:41.08px;height:10.70px;background:#3361b8;"></div>
<div style="left:770.79px;top:379.20px;width:1.40px;height:10.67px;background:#000;"></div>
<span class="c" style="left:671.19px;width:200px;top:396.16px;font-size:12px;color:#000;font-weight:400;-webkit-text-stroke:0.42px;">0</span>
<div style="left:839.26px;top:379.20px;width:1.40px;height:5.33px;background:#999;"></div>
<div style="left:907.72px;top:379.20px;width:1.40px;height:5.33px;background:#999;"></div>
<div style="left:976.19px;top:379.20px;width:1.40px;height:10.67px;background:#000;"></div>
<span class="c" style="left:876.59px;width:200px;top:396.16px;font-size:12px;color:#000;font-weight:400;-webkit-text-stroke:0.42px;">10</span>
<div style="left:1044.66px;top:379.20px;width:1.40px;height:5.33px;background:#999;"></div>
<div style="left:1113.13px;top:379.20px;width:1.40px;height:5.33px;background:#999;"></div>
<div style="left:1181.60px;top:379.20px;width:1.40px;height:10.67px;background:#000;"></div>
<span class="c" style="left:1082.00px;width:200px;top:396.16px;font-size:12px;color:#000;font-weight:400;-webkit-text-stroke:0.42px;">20</span>
<div style="left:1250.07px;top:379.20px;width:1.40px;height:5.33px;background:#999;"></div>
<div style="left:1318.54px;top:379.20px;width:1.40px;height:5.33px;background:#999;"></div>
<div style="left:1387.00px;top:379.20px;width:1.40px;height:10.67px;background:#000;"></div>
<span class="c" style="left:1287.40px;width:200px;top:396.16px;font-size:12px;color:#000;font-weight:400;-webkit-text-stroke:0.42px;">30</span>
<div style="left:1455.47px;top:379.20px;width:1.40px;height:5.33px;background:#999;"></div>
<div style="left:1523.94px;top:379.20px;width:1.40px;height:5.33px;background:#999;"></div>
<div style="left:1592.41px;top:379.20px;width:1.40px;height:10.67px;background:#000;"></div>
<span class="c" style="left:1492.81px;width:200px;top:396.16px;font-size:12px;color:#000;font-weight:400;-webkit-text-stroke:0.42px;">40</span>
<div style="left:1660.88px;top:379.20px;width:1.40px;height:5.33px;background:#999;"></div>
<div style="left:1729.35px;top:379.20px;width:1.40px;height:5.33px;background:#999;"></div>
<div style="left:1797.82px;top:379.20px;width:1.40px;height:10.67px;background:#000;"></div>
<span class="c" style="left:1698.22px;width:200px;top:396.16px;font-size:12px;color:#000;font-weight:400;-webkit-text-stroke:0.42px;">50</span>
<div style="left:1866.29px;top:379.20px;width:1.40px;height:5.33px;background:#999;"></div>
<div style="left:1934.75px;top:379.20px;width:1.40px;height:5.33px;background:#999;"></div>
<div style="left:2003.22px;top:379.20px;width:1.40px;height:10.67px;background:#000;"></div>
<span class="c" style="left:1903.62px;width:200px;top:396.16px;font-size:12px;color:#000;font-weight:400;-webkit-text-stroke:0.42px;">60</span>
<div style="left:2071.69px;top:379.20px;width:1.40px;height:5.33px;background:#999;"></div>
<div style="left:2140.16px;top:379.20px;width:1.40px;height:5.33px;background:#999;"></div>
<div style="left:2208.63px;top:379.20px;width:1.40px;height:10.67px;background:#000;"></div>
<span class="c" style="left:2109.03px;width:200px;top:396.16px;font-size:12px;color:#000;font-weight:400;-webkit-text-stroke:0.42px;">70</span>
<div style="left:2277.10px;top:379.20px;width:1.40px;height:5.33px;background:#999;"></div>
<div style="left:2345.57px;top:379.20px;width:1.40px;height:5.33px;background:#999;"></div>
<div style="left:2414.03px;top:379.20px;width:1.40px;height:10.67px;background:#000;"></div>
<span class="c" style="left:2314.43px;width:200px;top:396.16px;font-size:12px;color:#000;font-weight:400;-webkit-text-stroke:0.42px;">80</span>
<div style="left:2482.50px;top:379.20px;width:1.40px;height:5.33px;background:#999;"></div>
<div style="left:2550.97px;top:379.20px;width:1.40px;height:5.33px;background:#999;"></div>
<div style="left:2619.44px;top:379.20px;width:1.40px;height:10.67px;background:#000;"></div>
<span class="c" style="left:2519.84px;width:200px;top:396.16px;font-size:12px;color:#000;font-weight:400;-webkit-text-stroke:0.42px;">90</span>
<div style="left:2687.91px;top:379.20px;width:1.40px;height:5.33px;background:#999;"></div>
<div style="left:2756.38px;top:379.20px;width:1.40px;height:5.33px;background:#999;"></div>
<div style="left:2824.85px;top:379.20px;width:1.40px;height:10.67px;background:#000;"></div>
<span class="c" style="left:2725.25px;width:200px;top:396.16px;font-size:12px;color:#000;font-weight:400;-webkit-text-stroke:0.42px;">100</span>
<div style="left:2770.85px;top:357.40px;width:30.00px;height:30.00px;box-sizing:border-box;border:1px solid #ababab;background:#dedede;border-radius:50%;"></div>
<div style="left:2811.93px;top:357.40px;width:30.00px;height:30.00px;box-sizing:border-box;border:1px solid #ababab;background:#dedede;border-radius:50%;"></div>
<div style="left:758.20px;top:335.20px;width:27.30px;height:20.60px;background:rgba(0,0,0,.1);border-radius:4px;"></div>
<span class="c" style="left:671.85px;width:200px;top:339.30px;font-size:13.33px;color:#333;font-weight:400;-webkit-text-stroke:0.42px;">0%</span>
<div style="left:2761.00px;top:335.20px;width:95.00px;height:22.00px;background:#3361b8;border-radius:4px;"></div>
<span class="c" style="left:2708.50px;width:200px;top:339.38px;font-size:14.67px;color:#fff;font-weight:400;-webkit-text-stroke:0.42px;">98% — 100%</span>
<span style="left:758.57px;top:441.71px;font-size:21.33px;color:#000;font-weight:400;letter-spacing:0.314px;">Distance to telomeres</span>
<div style="left:758.20px;top:512.00px;width:2083.40px;height:9.70px;box-sizing:border-box;border:1px solid #ccc;border-radius:6px;background:linear-gradient(to bottom,#dedede -50%,#fff 150%);"></div>
<div style="left:841.34px;top:512.00px;width:164.32px;height:9.70px;background:#3361b8;"></div>
<div style="left:770.79px;top:522.10px;width:1.40px;height:10.67px;background:#000;"></div>
<span class="c" style="left:671.19px;width:200px;top:539.86px;font-size:12px;color:#000;font-weight:400;-webkit-text-stroke:0.42px;">0</span>
<div style="left:839.26px;top:522.10px;width:1.40px;height:5.33px;background:#999;"></div>
<div style="left:907.72px;top:522.10px;width:1.40px;height:5.33px;background:#999;"></div>
<div style="left:976.19px;top:522.10px;width:1.40px;height:10.67px;background:#000;"></div>
<span class="c" style="left:876.59px;width:200px;top:539.86px;font-size:12px;color:#000;font-weight:400;-webkit-text-stroke:0.42px;">15</span>
<div style="left:1044.66px;top:522.10px;width:1.40px;height:5.33px;background:#999;"></div>
<div style="left:1113.13px;top:522.10px;width:1.40px;height:5.33px;background:#999;"></div>
<div style="left:1181.60px;top:522.10px;width:1.40px;height:10.67px;background:#000;"></div>
<span class="c" style="left:1082.00px;width:200px;top:539.86px;font-size:12px;color:#000;font-weight:400;-webkit-text-stroke:0.42px;">30</span>
<div style="left:1250.07px;top:522.10px;width:1.40px;height:5.33px;background:#999;"></div>
<div style="left:1318.54px;top:522.10px;width:1.40px;height:5.33px;background:#999;"></div>
<div style="left:1387.00px;top:522.10px;width:1.40px;height:10.67px;background:#000;"></div>
<span class="c" style="left:1287.40px;width:200px;top:539.86px;font-size:12px;color:#000;font-weight:400;-webkit-text-stroke:0.42px;">45</span>
<div style="left:1455.47px;top:522.10px;width:1.40px;height:5.33px;background:#999;"></div>
<div style="left:1523.94px;top:522.10px;width:1.40px;height:5.33px;background:#999;"></div>
<div style="left:1592.41px;top:522.10px;width:1.40px;height:10.67px;background:#000;"></div>
<span class="c" style="left:1492.81px;width:200px;top:539.86px;font-size:12px;color:#000;font-weight:400;-webkit-text-stroke:0.42px;">60</span>
<div style="left:1660.88px;top:522.10px;width:1.40px;height:5.33px;background:#999;"></div>
<div style="left:1729.35px;top:522.10px;width:1.40px;height:5.33px;background:#999;"></div>
<div style="left:1797.82px;top:522.10px;width:1.40px;height:10.67px;background:#000;"></div>
<span class="c" style="left:1698.22px;width:200px;top:539.86px;font-size:12px;color:#000;font-weight:400;-webkit-text-stroke:0.42px;">75</span>
<div style="left:1866.29px;top:522.10px;width:1.40px;height:5.33px;background:#999;"></div>
<div style="left:1934.75px;top:522.10px;width:1.40px;height:5.33px;background:#999;"></div>
<div style="left:2003.22px;top:522.10px;width:1.40px;height:10.67px;background:#000;"></div>
<span class="c" style="left:1903.62px;width:200px;top:539.86px;font-size:12px;color:#000;font-weight:400;-webkit-text-stroke:0.42px;">90</span>
<div style="left:2071.69px;top:522.10px;width:1.40px;height:5.33px;background:#999;"></div>
<div style="left:2140.16px;top:522.10px;width:1.40px;height:5.33px;background:#999;"></div>
<div style="left:2208.63px;top:522.10px;width:1.40px;height:10.67px;background:#000;"></div>
<span class="c" style="left:2109.03px;width:200px;top:539.86px;font-size:12px;color:#000;font-weight:400;-webkit-text-stroke:0.42px;">105</span>
<div style="left:2277.10px;top:522.10px;width:1.40px;height:5.33px;background:#999;"></div>
<div style="left:2345.57px;top:522.10px;width:1.40px;height:5.33px;background:#999;"></div>
<div style="left:2414.03px;top:522.10px;width:1.40px;height:10.67px;background:#000;"></div>
<span class="c" style="left:2314.43px;width:200px;top:539.86px;font-size:12px;color:#000;font-weight:400;-webkit-text-stroke:0.42px;">120</span>
<div style="left:2482.50px;top:522.10px;width:1.40px;height:5.33px;background:#999;"></div>
<div style="left:2550.97px;top:522.10px;width:1.40px;height:5.33px;background:#999;"></div>
<div style="left:2619.44px;top:522.10px;width:1.40px;height:10.67px;background:#000;"></div>
<span class="c" style="left:2519.84px;width:200px;top:539.86px;font-size:12px;color:#000;font-weight:400;-webkit-text-stroke:0.42px;">135</span>
<div style="left:2687.91px;top:522.10px;width:1.40px;height:5.33px;background:#999;"></div>
<div style="left:2756.38px;top:522.10px;width:1.40px;height:5.33px;background:#999;"></div>
<div style="left:2824.85px;top:522.10px;width:1.40px;height:10.67px;background:#000;"></div>
<span class="c" style="left:2725.25px;width:200px;top:539.86px;font-size:12px;color:#000;font-weight:400;-webkit-text-stroke:0.42px;">150</span>
<div style="left:826.34px;top:500.30px;width:30.00px;height:30.00px;box-sizing:border-box;border:1px solid #ababab;background:#dedede;border-radius:50%;"></div>
<div style="left:990.66px;top:500.30px;width:30.00px;height:30.00px;box-sizing:border-box;border:1px solid #ababab;background:#dedede;border-radius:50%;"></div>
<div style="left:2781.00px;top:478.10px;width:60.60px;height:20.60px;background:rgba(0,0,0,.1);border-radius:4px;"></div>
<span class="c" style="left:2711.30px;width:200px;top:482.20px;font-size:13.33px;color:#333;font-weight:400;-webkit-text-stroke:0.42px;">150 Mbp</span>
<div style="left:816.84px;top:478.10px;width:49.00px;height:22.90px;background:#3361b8;border-radius:4px;"></div>
<span class="c" style="left:741.34px;width:200px;top:482.73px;font-size:14.67px;color:#fff;font-weight:400;-webkit-text-stroke:0.42px;">5 Mbp</span>
<div style="left:976.71px;top:478.10px;width:57.90px;height:22.90px;background:#3361b8;border-radius:4px;"></div>
<span class="c" style="left:905.66px;width:200px;top:482.73px;font-size:14.67px;color:#fff;font-weight:400;-webkit-text-stroke:0.42px;">17 Mbp</span>
<div style="left:736.20px;top:622.80px;width:185.70px;height:50.30px;background:#28509a;border-radius:8px;box-shadow:0 0 0 5.3px #a6bbe0;"></div>
<span style="left:752.87px;top:637.01px;font-size:21.33px;color:#fff;font-weight:400;letter-spacing:-0.016px;">Update analysis</span>
<span style="left:947.77px;top:636.61px;font-size:21.33px;color:#3361b8;font-weight:400;letter-spacing:0.307px;text-decoration:underline;text-decoration-thickness:1.5px;text-underline-offset:2.5px;">Powered by g:Profiler</span>
<svg style="left:0;top:0" width="2879" height="1522" viewBox="0 0 2879 1522" font-family='"Liberation Sans", sans-serif' stroke-width="0.15"><rect x="800" y="733.5" width="1.2" height="408" fill="#bababa"/><rect x="800" y="1140" width="2054.6" height="1.9" fill="#bababa"/><path d="M795 784.3H800.7" stroke="#bababa" stroke-width="1.3"/><text x="791.4" y="790.0" text-anchor="end" font-size="16" fill="#444" stroke="#444">6</text><path d="M795 885.9H800.7" stroke="#bababa" stroke-width="1.3"/><text x="791.4" y="891.6" text-anchor="end" font-size="16" fill="#444" stroke="#444">4</text><path d="M795 987.6H800.7" stroke="#bababa" stroke-width="1.3"/><text x="791.4" y="993.3" text-anchor="end" font-size="16" fill="#444" stroke="#444">2</text><path d="M795 1089.2H800.7" stroke="#bababa" stroke-width="1.3"/><text x="791.4" y="1094.9" text-anchor="end" font-size="16" fill="#444" stroke="#444">0</text><text transform="translate(761.6,937.5) rotate(-90)" text-anchor="middle" font-size="19.8" fill="#000" stroke="#000" textLength="118.5" lengthAdjust="spacingAndGlyphs" stroke-width="0.1">-log10(p-adj)</text><text x="1828.3" y="726.6" text-anchor="middle" font-size="18.67" fill="#aaa" stroke="#aaa" textLength="72.4" lengthAdjust="spacingAndGlyphs">query_1</text><rect x="821.0" y="1132.6" width="233.6" height="7.4" fill="#cb4528"/><text transform="translate(942.8,1156.2) rotate(-45)" text-anchor="end" font-size="15.4" letter-spacing="-0.35" fill="#444" stroke="#444">GO:MF</text><rect x="1075.8" y="1132.6" width="84.6" height="7.4" fill="#3f9a36"/><text transform="translate(1123.1,1156.2) rotate(-45)" text-anchor="end" font-size="15.4" letter-spacing="-0.35" fill="#444" stroke="#444">GO:CC</text><rect x="1181.0" y="1132.6" width="568.0" height="7.4" fill="#f09c33"/><text transform="translate(1470.0,1156.2) rotate(-45)" text-anchor="end" font-size="15.4" letter-spacing="-0.35" fill="#444" stroke="#444">GO:BP</text><rect x="1769.6" y="1132.6" width="12.2" height="7.4" fill="#d24a6f"/><text transform="translate(1780.7,1156.2) rotate(-45)" text-anchor="end" font-size="15.4" letter-spacing="-0.35" fill="#444" stroke="#444">KEGG</text><rect x="1802.4" y="1132.6" width="56.0" height="7.4" fill="#3c62c4"/><text transform="translate(1835.4,1156.2) rotate(-45)" text-anchor="end" font-size="15.4" letter-spacing="-0.35" fill="#444" stroke="#444">REAC</text><rect x="1879.0" y="1132.6" width="248.2" height="7.4" fill="#5873a3"/><text transform="translate(2008.1,1156.2) rotate(-45)" text-anchor="end" font-size="15.4" letter-spacing="-0.35" fill="#444" stroke="#444">TF</text><rect x="2147.8" y="1132.6" width="56.0" height="7.4" fill="#4ea898"/><text transform="translate(2180.8,1156.2) rotate(-45)" text-anchor="end" font-size="15.4" letter-spacing="-0.35" fill="#444" stroke="#444">MIRNA</text><rect x="2224.4" y="1132.6" width="17.9" height="7.4" fill="#5c33c7"/><text transform="translate(2238.4,1156.2) rotate(-45)" text-anchor="end" font-size="15.4" letter-spacing="-0.35" fill="#444" stroke="#444">HPA</text><rect x="2263.0" y="1132.6" width="61.1" height="7.4" fill="#75a533"/><text transform="translate(2298.6,1156.2) rotate(-45)" text-anchor="end" font-size="15.4" letter-spacing="-0.35" fill="#444" stroke="#444">CORUM</text><rect x="2344.7" y="1132.6" width="373.6" height="7.4" fill="#8f1b93"/><text transform="translate(2536.5,1156.2) rotate(-45)" text-anchor="end" font-size="15.4" letter-spacing="-0.35" fill="#444" stroke="#444">HP</text><rect x="2739.0" y="1132.6" width="17.9" height="7.4" fill="#3f95c6"/><text transform="translate(2752.9,1156.2) rotate(-45)" text-anchor="end" font-size="15.4" letter-spacing="-0.35" fill="#444" stroke="#444">WP</text><circle cx="1910.5" cy="992.4" r="16.4" fill="#7c90bb"/><circle cx="1903.5" cy="999" r="4.4" fill="#6479ab"/><circle cx="2045.4" cy="996.1" r="4" fill="#7c90bb"/></svg>
<span style="left:735.47px;top:1257.91px;font-size:21.33px;color:#2b2f33;font-weight:400;letter-spacing:-0.506px;">Show</span>
<div style="left:793.40px;top:1249.40px;width:92.20px;height:40.80px;box-sizing:border-box;border:1px solid #ced4da;border-radius:5.3px;background:#fff;"></div>
<span style="left:804.73px;top:1261.09px;font-size:18.67px;color:#2b2f33;font-weight:400;letter-spacing:-0.306px;">25</span>
<svg style="left:851.5px;top:1265.5px" width="15" height="10" viewBox="0 0 15 10"><path d="M1.5 1.8L7.5 7.8L13.5 1.8" fill="none" stroke="#343a40" stroke-width="2" stroke-linecap="round" stroke-linejoin="round"/></svg>
<span style="left:890.57px;top:1257.91px;font-size:21.33px;color:#2b2f33;font-weight:400;letter-spacing:0.300px;transform:scaleX(1.0305);transform-origin:0 0;">entries</span>
<span style="left:2554.37px;top:1258.21px;font-size:21.33px;color:#2b2f33;font-weight:400;letter-spacing:-0.629px;">Search:</span>
<div style="left:2634.40px;top:1249.30px;width:228.80px;height:41.10px;box-sizing:border-box;border:1px solid #ced4da;border-radius:5.3px;background:#fff;"></div>
<span style="left:746.87px;top:1315.01px;font-size:21.33px;color:#2b2f33;font-weight:700;letter-spacing:-0.815px;-webkit-text-stroke:0.5px;">Source</span>
<span style="left:951.67px;top:1315.01px;font-size:21.33px;color:#2b2f33;font-weight:700;letter-spacing:-0.279px;-webkit-text-stroke:0.5px;">Term</span>
<span style="left:1983.87px;top:1315.01px;font-size:21.33px;color:#2b2f33;font-weight:700;letter-spacing:0.342px;-webkit-text-stroke:0.5px;">Total ratio</span>
<span style="left:2262.87px;top:1315.01px;font-size:21.33px;color:#2b2f33;font-weight:700;letter-spacing:0.284px;-webkit-text-stroke:0.5px;">Query ratio</span>
<span style="left:2528.37px;top:1315.01px;font-size:21.33px;color:#2b2f33;font-weight:700;letter-spacing:-0.189px;-webkit-text-stroke:0.5px;">Increase</span>
<span style="left:2754.17px;top:1315.01px;font-size:21.33px;color:#2b2f33;font-weight:700;letter-spacing:0.011px;-webkit-text-stroke:0.5px;">p-value</span>
<svg style="left:915.20px;top:1312.9px" width="10.6" height="23.4" viewBox="0 0 10.6 23.4"><path d="M5.3 0L10.6 10.7H0zM5.3 23.3L10.6 13.1H0z" fill="#e4e4e4"/></svg>
<svg style="left:1828.20px;top:1312.9px" width="10.6" height="23.4" viewBox="0 0 10.6 23.4"><path d="M5.3 0L10.6 10.7H0zM5.3 23.3L10.6 13.1H0z" fill="#e4e4e4"/></svg>
<svg style="left:2098.80px;top:1312.9px" width="10.6" height="23.4" viewBox="0 0 10.6 23.4"><path d="M5.3 0L10.6 10.7H0zM5.3 23.3L10.6 13.1H0z" fill="#e4e4e4"/></svg>
<svg style="left:2389.10px;top:1312.9px" width="10.6" height="23.4" viewBox="0 0 10.6 23.4"><path d="M5.3 0L10.6 10.7H0zM5.3 23.3L10.6 13.1H0z" fill="#e4e4e4"/></svg>
<svg style="left:2623.20px;top:1312.9px" width="10.6" height="23.4" viewBox="0 0 10.6 23.4"><path d="M5.3 0L10.6 10.7H0zM5.3 23.3L10.6 13.1H0z" fill="#e4e4e4"/></svg>
<svg style="left:2838.90px;top:1312.9px" width="10.6" height="23.4" viewBox="0 0 10.6 23.4"><path d="M5.3 0L10.6 10.7H0zM5.3 23.3L10.6 13.1H0z" fill="#e4e4e4"/></svg>
<div style="left:736.00px;top:1352.00px;width:2127.60px;height:1.30px;background:#dcdfe3;"></div>
<div style="left:736.00px;top:1353.30px;width:2127.60px;height:54.20px;background:#f2f2f2;border-bottom:1px solid #dee2e6;box-sizing:border-box;"></div>
<span style="left:746.87px;top:1370.01px;font-size:21.33px;color:#2b2f33;font-weight:400;letter-spacing:-0.300px;transform:scaleX(0.8943);transform-origin:0 0;">TF</span>
<span style="left:952.07px;top:1370.01px;font-size:21.33px;color:#2b2f33;font-weight:400;letter-spacing:-0.323px;">Factor:</span>
<span style="left:1022.77px;top:1370.01px;font-size:21.33px;color:#2b2f33;font-weight:400;letter-spacing:-0.300px;transform:scaleX(0.9172);transform-origin:0 0;">E2F-2;</span>
<span style="left:1086.97px;top:1370.01px;font-size:21.33px;color:#2b2f33;font-weight:400;letter-spacing:0.300px;transform:scaleX(1.0575);transform-origin:0 0;">motif:</span>
<span style="left:1150.07px;top:1370.01px;font-size:21.33px;color:#2b2f33;font-weight:400;letter-spacing:-0.300px;transform:scaleX(0.8679);transform-origin:0 0;">GCGCGCGCNCS;</span>
<span style="left:1309.37px;top:1370.01px;font-size:21.33px;color:#2b2f33;font-weight:400;letter-spacing:0.012px;">match</span>
<span style="left:1373.97px;top:1370.01px;font-size:21.33px;color:#2b2f33;font-weight:400;letter-spacing:-0.898px;">class:</span>
<span style="left:1430.47px;top:1370.01px;font-size:21.33px;color:#2b2f33;font-weight:400;letter-spacing:-0.300px;transform:scaleX(0.7723);transform-origin:0 0;">1</span>
<span style="left:2041.67px;top:1370.01px;font-size:21.33px;color:#2b2f33;font-weight:400;letter-spacing:-0.261px;">77.66%</span>
<span style="left:2332.37px;top:1370.01px;font-size:21.33px;color:#2b2f33;font-weight:400;letter-spacing:-0.261px;">92.64%</span>
<span style="left:2566.97px;top:1370.01px;font-size:21.33px;color:#2b2f33;font-weight:400;letter-spacing:-0.441px;">19.28%</span>
<span style="left:2788.07px;top:1370.01px;font-size:21.33px;color:#2b2f33;font-weight:400;letter-spacing:-0.179px;">0.0122</span>
<div style="left:736.00px;top:1408.20px;width:2127.60px;height:54.00px;background:#fff;border-bottom:1px solid #dee2e6;box-sizing:border-box;"></div>
<span style="left:746.87px;top:1424.21px;font-size:21.33px;color:#2b2f33;font-weight:400;letter-spacing:-0.300px;transform:scaleX(0.8943);transform-origin:0 0;">TF</span>
<span style="left:952.07px;top:1424.21px;font-size:21.33px;color:#2b2f33;font-weight:400;letter-spacing:-0.323px;">Factor:</span>
<span style="left:1021.97px;top:1424.21px;font-size:21.33px;color:#2b2f33;font-weight:400;letter-spacing:-0.300px;transform:scaleX(0.8983);transform-origin:0 0;">SP2;</span>
<span style="left:1068.77px;top:1424.21px;font-size:21.33px;color:#2b2f33;font-weight:400;letter-spacing:0.300px;transform:scaleX(1.0649);transform-origin:0 0;">motif:</span>
<span style="left:1132.37px;top:1424.21px;font-size:21.33px;color:#2b2f33;font-weight:400;letter-spacing:-0.300px;transform:scaleX(0.8802);transform-origin:0 0;">GGGCGGGAC</span>
<span style="left:2041.67px;top:1424.21px;font-size:21.33px;color:#2b2f33;font-weight:400;letter-spacing:-0.261px;">49.12%</span>
<span style="left:2332.37px;top:1424.21px;font-size:21.33px;color:#2b2f33;font-weight:400;letter-spacing:-0.261px;">68.71%</span>
<span style="left:2566.97px;top:1424.21px;font-size:21.33px;color:#2b2f33;font-weight:400;letter-spacing:-0.441px;">39.88%</span>
<span style="left:2788.07px;top:1424.21px;font-size:21.33px;color:#2b2f33;font-weight:400;letter-spacing:-0.179px;">0.0145</span>
<div style="left:736.00px;top:1462.90px;width:2127.60px;height:53.60px;background:#f2f2f2;border-bottom:1px solid #dee2e6;box-sizing:border-box;"></div>
<span style="left:746.87px;top:1478.21px;font-size:21.33px;color:#2b2f33;font-weight:400;letter-spacing:-0.300px;transform:scaleX(0.8943);transform-origin:0 0;">TF</span>
<span style="left:952.07px;top:1478.21px;font-size:21.33px;color:#2b2f33;font-weight:400;letter-spacing:-0.323px;">Factor:</span>
<span style="left:1022.37px;top:1478.21px;font-size:21.33px;color:#2b2f33;font-weight:400;letter-spacing:-0.300px;transform:scaleX(0.8611);transform-origin:0 0;">CTCF;</span>
<span style="left:1081.87px;top:1478.21px;font-size:21.33px;color:#2b2f33;font-weight:400;letter-spacing:0.300px;transform:scaleX(1.0649);transform-origin:0 0;">motif:</span>
<span style="left:1145.47px;top:1478.21px;font-size:21.33px;color:#2b2f33;font-weight:400;letter-spacing:-0.300px;transform:scaleX(0.8848);transform-origin:0 0;">NCCRSTAGGGGGCGC</span>
<span style="left:2041.67px;top:1478.21px;font-size:21.33px;color:#2b2f33;font-weight:400;letter-spacing:-0.261px;">49.23%</span>
<span style="left:2332.37px;top:1478.21px;font-size:21.33px;color:#2b2f33;font-weight:400;letter-spacing:-0.261px;">68.71%</span>
<span style="left:2566.97px;top:1478.21px;font-size:21.33px;color:#2b2f33;font-weight:400;letter-spacing:-0.441px;">39.59%</span>
<span style="left:2788.07px;top:1478.21px;font-size:21.33px;color:#2b2f33;font-weight:400;letter-spacing:-0.179px;">0.0166</span>
</div></body></html>
